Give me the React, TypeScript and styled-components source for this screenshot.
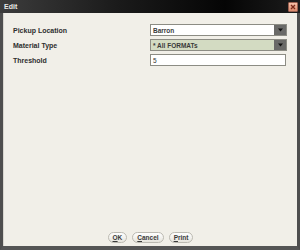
import React from 'react'
import styled, { createGlobalStyle } from 'styled-components'

const GlobalStyle = createGlobalStyle`
  html, body {
    margin: 0;
    padding: 0;
    width: 300px;
    height: 250px;
    overflow: hidden;
    font-family: "Liberation Sans", Arial, sans-serif;
  }
`

const Window = styled.div`
  width: 300px;
  height: 250px;
  box-sizing: border-box;
  display: flex;
  flex-direction: column;
  background: #4a4a4a;
  border-left: 3px solid #4e4e4e;
  border-right: 3px solid #4e4e4e;
  border-bottom: 4px solid #555;
`

const TitleBar = styled.div`
  height: 13px;
  margin: 0 -3px;
  padding: 0 2px 0 4px;
  display: flex;
  align-items: center;
  justify-content: space-between;
  background: linear-gradient(to right, #3c3c3c 0%, #1a1a1a 40%, #050505 75%, #1c1c1c 100%);
`

const Title = styled.span`
  color: #e8e8e8;
  font-size: 7px;
  font-weight: bold;
`

const CloseButton = styled.div`
  width: 10px;
  height: 10px;
  box-sizing: border-box;
  border: 1px solid #9a6050;
  border-radius: 1px;
  background: linear-gradient(#f6c0a8, #dc8a6c);
  display: flex;
  align-items: center;
  justify-content: center;
`

const Body = styled.div`
  flex: 1;
  display: flex;
  flex-direction: column;
  background: #f1efe8;
  border-left: 1px solid #d8d6cf;
`

const Form = styled.div`
  flex: 1;
  display: grid;
  grid-template-columns: 137px 137px;
  grid-auto-rows: 12px;
  row-gap: 3px;
  align-content: start;
  padding: 11px 0 0 9px;
`

const Label = styled.div`
  font-size: 7px;
  font-weight: bold;
  color: #2e2e2e;
  display: flex;
  align-items: center;
`

const Select = styled.div<{ $tint?: boolean }>`
  display: flex;
  box-sizing: border-box;
  border: 1px solid #8c8c84;
  background: ${p => (p.$tint ? '#d3dbc2' : '#ffffff')};
`

const SelectText = styled.div`
  flex: 1;
  font-size: 6.5px;
  font-weight: bold;
  color: #3a3a3a;
  display: flex;
  align-items: center;
  padding-left: 2px;
`

const Arrow = styled.div`
  width: 12px;
  background: #6a6a68;
  display: flex;
  align-items: center;
  justify-content: center;
`

const TextInput = styled.div`
  box-sizing: border-box;
  border: 1px solid #8c8c84;
  background: #ffffff;
  font-size: 6.5px;
  color: #333;
  display: flex;
  align-items: center;
  padding-left: 2px;
  margin-right: 1px;
`

const ButtonBar = styled.div`
  display: flex;
  justify-content: center;
  gap: 5px;
  padding: 0 0 3px 0;
`

const Button = styled.div`
  height: 11px;
  box-sizing: border-box;
  padding: 0 4px;
  border: 1px solid #bcbab2;
  border-radius: 6px;
  background: linear-gradient(#ffffff, #e6e4dc);
  font-size: 6.5px;
  font-weight: bold;
  color: #3a3a3a;
  display: flex;
  align-items: center;
  u {
    text-decoration: underline;
  }
`

const ArrowIcon = () => (
  <svg width="5" height="4" viewBox="0 0 5 4">
    <path d="M0 0.5 L5 0.5 L2.5 3.5 Z" fill="#111" />
  </svg>
)

const CloseIcon = () => (
  <svg width="6" height="6" viewBox="0 0 6 6">
    <path d="M1 1 L5 5 M5 1 L1 5" stroke="#7a2a1a" strokeWidth="1.3" />
  </svg>
)

const App = () => {
  return (
    <>
      <GlobalStyle />
      <Window>
        <TitleBar>
          <Title>Edit</Title>
          <CloseButton>
            <CloseIcon />
          </CloseButton>
        </TitleBar>
        <Body>
          <Form>
            <Label>Pickup Location</Label>
            <Select>
              <SelectText>Barron</SelectText>
              <Arrow>
                <ArrowIcon />
              </Arrow>
            </Select>
            <Label>Material Type</Label>
            <Select $tint>
              <SelectText>* All FORMATs</SelectText>
              <Arrow>
                <ArrowIcon />
              </Arrow>
            </Select>
            <Label>Threshold</Label>
            <TextInput>5</TextInput>
          </Form>
          <ButtonBar>
            <Button>
              <u>O</u>K
            </Button>
            <Button>
              <u>C</u>ancel
            </Button>
            <Button>
              <u>P</u>rint
            </Button>
          </ButtonBar>
        </Body>
      </Window>
    </>
  )
}

export default App
